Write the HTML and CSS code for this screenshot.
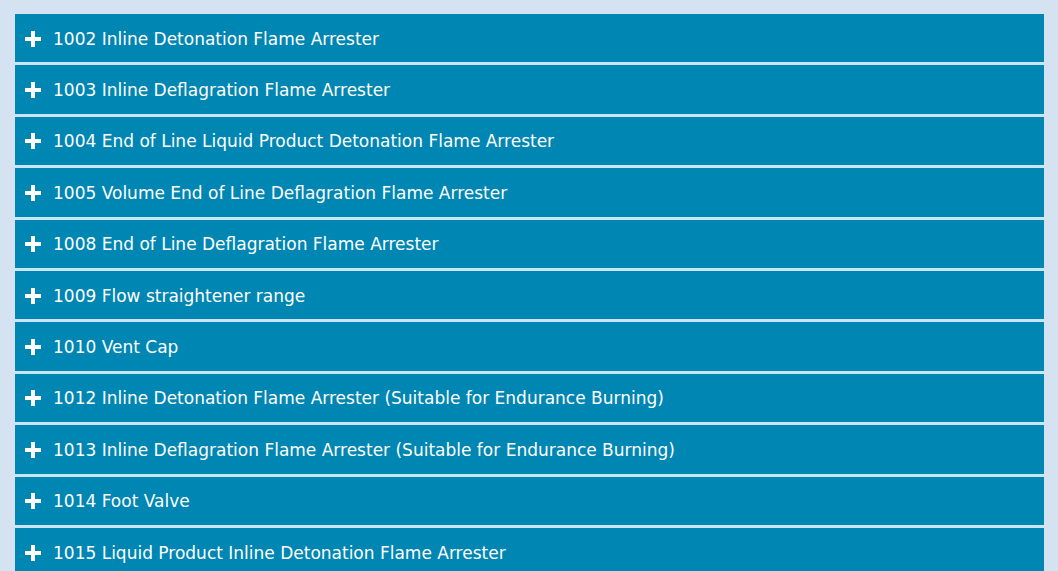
FILE: index.html
```html
<!DOCTYPE html>
<html lang="en">
<head>
  <meta charset="UTF-8">
  <meta name="viewport" content="width=device-width, initial-scale=1.0">
  <title>Flame Arresters</title>
  <link rel="stylesheet" href="styles.css">
</head>
<body>

  <div class="accordion">
    <div class="item"><span class="plus"></span>1002 Inline Detonation Flame Arrester</div>
    <div class="item"><span class="plus"></span>1003 Inline Deflagration Flame Arrester</div>
    <div class="item"><span class="plus"></span>1004 End of Line Liquid Product Detonation Flame Arrester</div>
    <div class="item"><span class="plus"></span>1005 Volume End of Line Deflagration Flame Arrester</div>
    <div class="item"><span class="plus"></span>1008 End of Line Deflagration Flame Arrester</div>
    <div class="item"><span class="plus"></span>1009 Flow straightener range</div>
    <div class="item"><span class="plus"></span>1010 Vent Cap</div>
    <div class="item"><span class="plus"></span>1012 Inline Detonation Flame Arrester (Suitable for Endurance Burning)</div>
    <div class="item"><span class="plus"></span>1013 Inline Deflagration Flame Arrester (Suitable for Endurance Burning)</div>
    <div class="item"><span class="plus"></span>1014 Foot Valve</div>
    <div class="item"><span class="plus"></span>1015 Liquid Product Inline Detonation Flame Arrester</div>
  </div>

</body>
</html>
```

FILE: styles.css
```css
body {
  font-family: "DejaVu Sans", Verdana, sans-serif;
  background: #d4e2f1;
  margin: 0;
  padding: 14px 14px 0 15px;
}
.accordion {
  display: flex;
  flex-direction: column;
  gap: 3px;
  background: #c9e5f6;
}
.item {
  height: 48.4px;
  display: flex;
  align-items: center;
  padding-left: 10px;
  padding-top: 1px;
  box-sizing: border-box;
  background: #0086b3;
  color: #ffffff;
  font-size: 17px;
}
.plus {
  position: relative;
  width: 16px;
  height: 16px;
  margin-right: 12px;
  flex-shrink: 0;
}
.plus::before,
.plus::after {
  content: "";
  position: absolute;
  background: #ffffff;
}
.plus::before {
  left: 0;
  top: 6px;
  width: 16px;
  height: 4px;
}
.plus::after {
  left: 6px;
  top: 0;
  width: 4px;
  height: 16px;
}
```
